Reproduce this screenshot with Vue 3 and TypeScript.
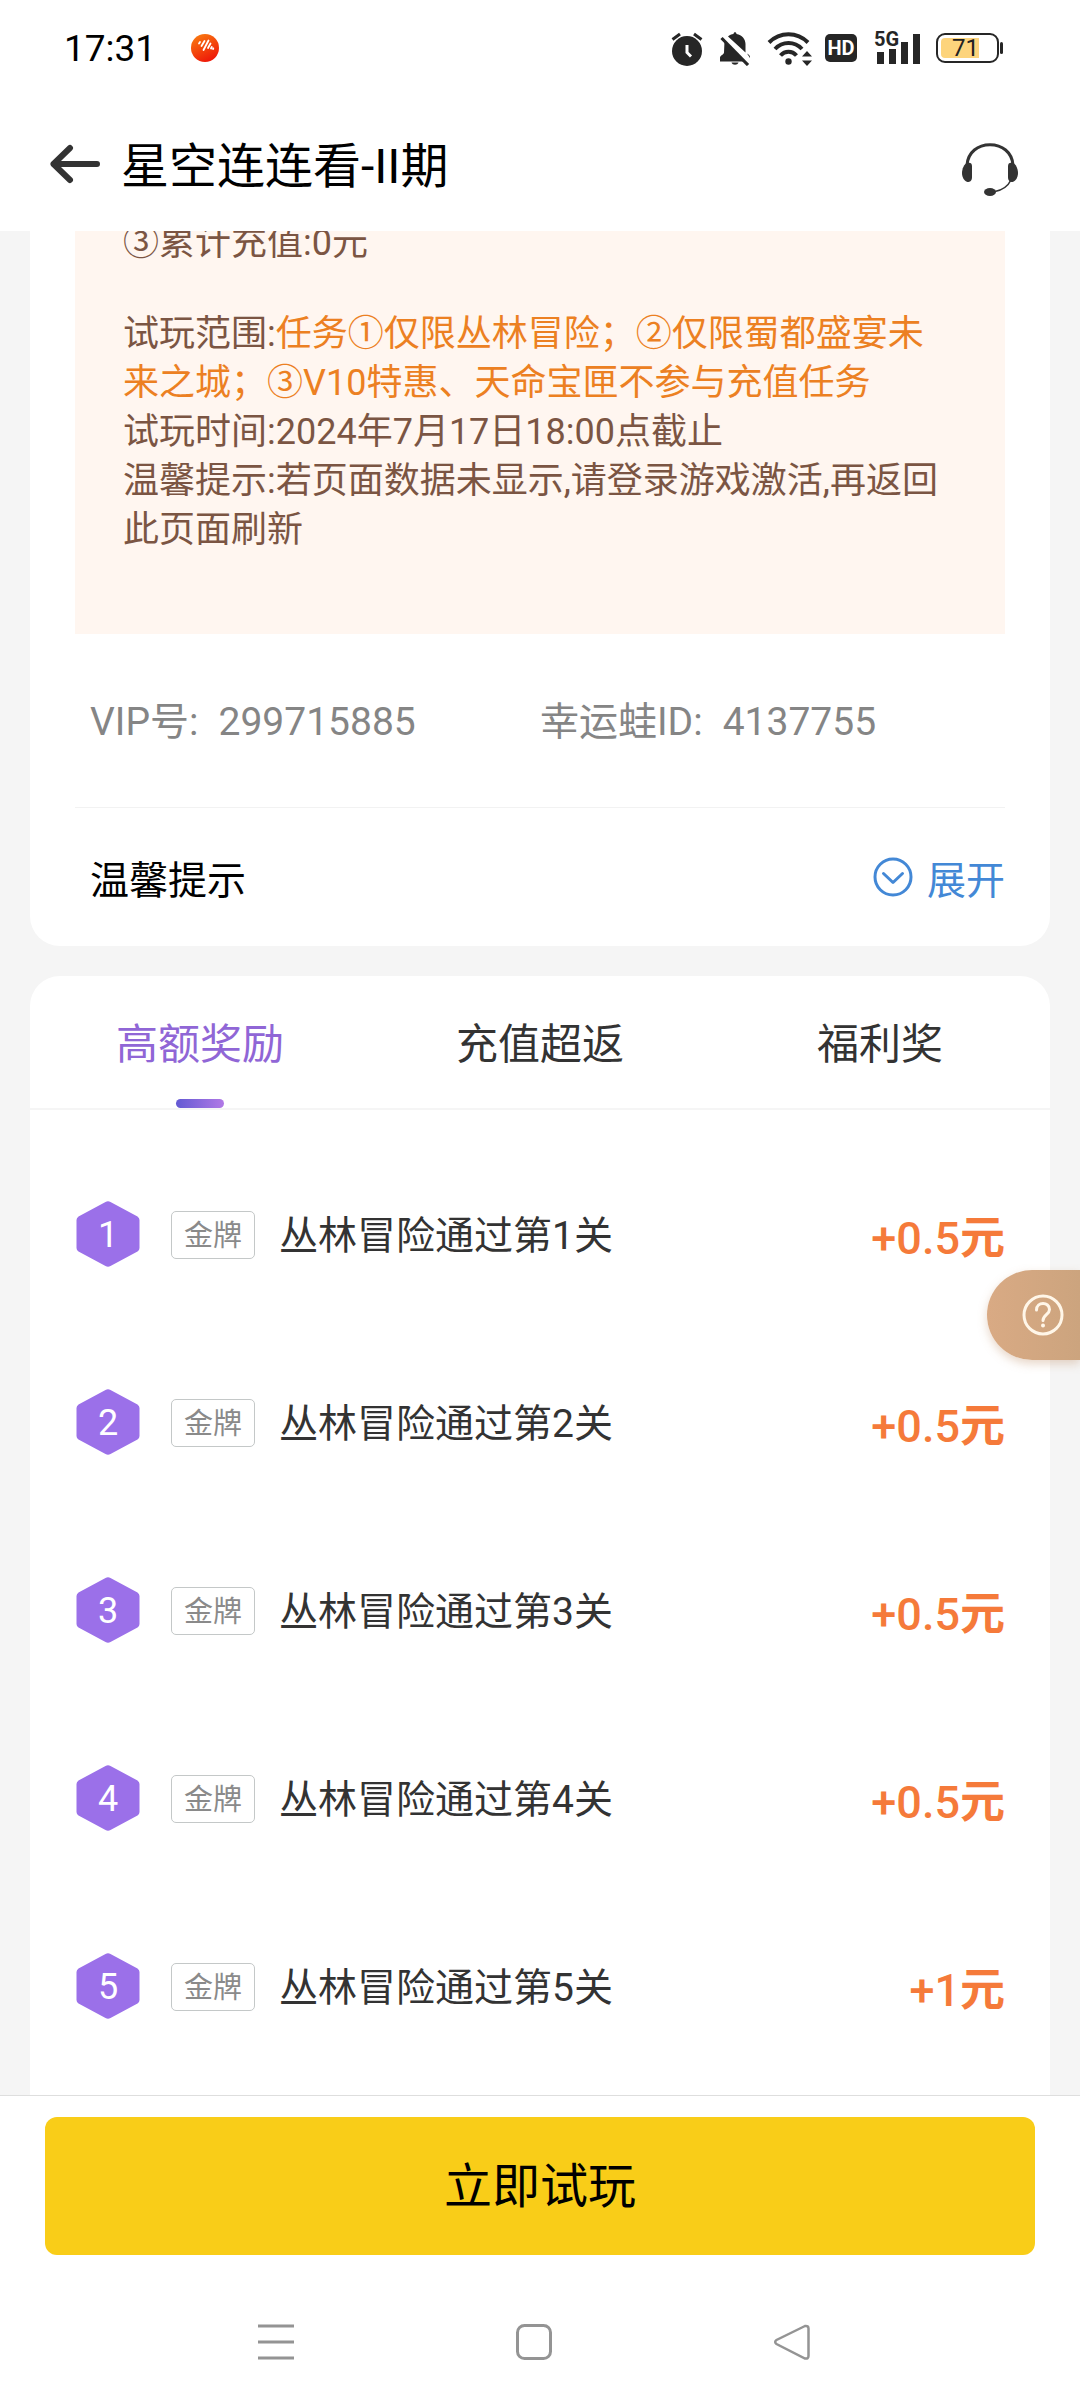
<script setup lang="ts">
import { ref } from 'vue'

interface Task {
  id: number
  level: string
  name: string
  reward: string
}

const tabs: string[] = ['高额奖励', '充值超返', '福利奖']
const activeTab = ref<number>(0)

const tasks: Task[] = [
  { id: 1, level: '金牌', name: '丛林冒险通过第1关', reward: '+0.5' },
  { id: 2, level: '金牌', name: '丛林冒险通过第2关', reward: '+0.5' },
  { id: 3, level: '金牌', name: '丛林冒险通过第3关', reward: '+0.5' },
  { id: 4, level: '金牌', name: '丛林冒险通过第4关', reward: '+0.5' },
  { id: 5, level: '金牌', name: '丛林冒险通过第5关', reward: '+1' },
]
</script>

<template>
  <div class="page">
    <div class="status">
      <span class="clock">17:31</span>
      <svg class="app-dot" width="28" height="28" viewBox="0 0 28 28" aria-hidden="true">
        <defs>
          <linearGradient id="dot" x1="0.2" y1="0" x2="0.7" y2="1">
            <stop offset="0" stop-color="#f97a10" />
            <stop offset="1" stop-color="#ee1408" />
          </linearGradient>
        </defs>
        <circle cx="14" cy="14" r="14" fill="url(#dot)" />
        <g stroke="#fff" stroke-width="1.8" stroke-linecap="round">
          <path d="M8 9.5l1-1.5M10.5 12l3-5M12.500 16l5-9.500M17 14l2.500-4.500M20 14.500l.8-1.500M22 15l.3-.6" />
        </g>
      </svg>
      <div class="status-icons">
        <svg width="32" height="36" viewBox="0 0 32 36" aria-hidden="true">
          <circle cx="16" cy="21" r="15" fill="#262626" />
          <path d="M1.500 9.500L9 4M30.500 9.500L23 4" stroke="#262626" stroke-width="3" />
          <path d="M16 15v7.500l4 4" stroke="#fff" stroke-width="3" fill="none" />
        </svg>
        <svg class="bell" width="32" height="36" viewBox="0 0 32 36" aria-hidden="true">
          <path d="M9 6.500C10.500 5 12.500 4.300 14.500 4C14.500 1.500 17.500 1.500 17.500 4C23 5 26.500 9 26.500 14v8.500z" fill="#262626" />
          <path d="M5.500 11L25 31.500H1v-4c0-2 4-3 4-5z" fill="#262626" />
          <path d="M28 23.500c1.500 1 3 2 3 3.500v1z" fill="#262626" />
          <path d="M12.500 32.500h7c-1 3-6 3-7 0z" fill="#262626" />
          <path d="M2.500 8l26.500 27" stroke="#262626" stroke-width="3.200" />
        </svg>
        <svg class="wifi" width="46" height="36" viewBox="0 0 46 36" aria-hidden="true">
          <g fill="none" stroke="#262626" stroke-width="4">
            <path d="M3 12.500C14 1.500 31 1.500 42 12.500" />
            <path d="M9 19C16.500 11 28.500 11 36 19" />
            <path d="M14.500 25.500C19 20.500 26 20.500 30.500 25.500" />
          </g>
          <circle cx="22.500" cy="31.500" r="3.200" fill="#262626" />
          <path d="M36 26.500l5-5.500 5 5.500zM36 30.500l5 5.500 5-5.500z" fill="#262626" />
        </svg>
        <span class="hd">HD</span>
        <span class="signal">
          <span class="net">5G</span>
          <svg width="46" height="34" viewBox="0 0 46 34" aria-hidden="true">
            <path d="M3 21h7v12H3zM15 18h7v15h-7zM27 11h7v22h-7zM39 3h7v30h-7z" fill="#262626" />
          </svg>
        </span>
        <span class="battery"><span class="charge">71</span></span>
      </div>
    </div>

    <header class="header">
      <button class="icon-btn" type="button" aria-label="返回">
        <svg width="50" height="40" viewBox="0 0 50 40">
          <path d="M20 4L3.500 20L20 36M3.500 20H47" fill="none" stroke="#333" stroke-width="6" stroke-linecap="round" stroke-linejoin="round" />
        </svg>
      </button>
      <h1 class="title">星空连连看-II期</h1>
      <button class="icon-btn service" type="button" aria-label="客服">
        <svg width="56" height="54" viewBox="0 0 56 54">
          <path d="M5 22C6 9 16 1.700 28 1.700S50 9 51 22" fill="none" stroke="#333" stroke-width="3" />
          <path d="M5 20c3-1 5 0 5 3v11c0 4-2 5-4.500 5C2 38 0 34 0 30c0-4 2-9 5-10z" fill="#333" />
          <path d="M51 20c-3-1-5 0-5 3v11c0 4 2 5 4.500 5C54 38 56 34 56 30c0-4-2-9-5-10z" fill="#333" />
          <path d="M49 37c-3 6-8 10-16 11.500" fill="none" stroke="#333" stroke-width="1.600" />
          <ellipse cx="28" cy="49" rx="6" ry="4" fill="#333" />
        </svg>
      </button>
    </header>

    <main class="content">
      <section class="card info">
        <div class="notice">
          <p class="para">③累计充值:0元</p>
          <p>试玩范围:<em>任务①仅限丛林冒险；②仅限蜀都盛宴未来之城；③V10特惠、天命宝匣不参与充值任务</em></p>
          <p>试玩时间:2024年7月17日18:00点截止</p>
          <p>温馨提示:若页面数据未显示,请登录游戏激活,再返回此页面刷新</p>
        </div>
        <dl class="ids">
          <div><dt>VIP号:</dt><dd>299715885</dd></div>
          <div><dt>幸运蛙ID:</dt><dd>4137755</dd></div>
        </dl>
        <div class="tip">
          <h2>温馨提示</h2>
          <button class="expand" type="button">
            <svg width="40" height="40" viewBox="0 0 40 40" aria-hidden="true">
              <g fill="none" stroke="#4388d6" stroke-width="3" stroke-linecap="round" stroke-linejoin="round">
                <circle cx="20" cy="20" r="18" />
                <path d="M10.500 16.500L20 25.500L29.500 16.500" />
              </g>
            </svg>
            展开
          </button>
        </div>
      </section>

      <section class="card tasks">
        <div class="tabs" role="tablist">
          <button
            v-for="(tab, i) in tabs"
            :key="tab"
            class="tab"
            :class="{ active: i === activeTab }"
            type="button"
            role="tab"
            :aria-selected="i === activeTab"
            @click="activeTab = i"
          >{{ tab }}</button>
        </div>
        <ol class="list">
          <li v-for="task in tasks" :key="task.id" class="task">
            <span class="num">
              <svg width="64" height="66" viewBox="0 0 64 66" aria-hidden="true">
                <path d="M29.500 1Q32 -.5 34.500 1L61.500 15.500Q63.500 17 63.500 19V47Q63.500 49 61.500 50.500L34.500 65Q32 66.500 29.500 65L2.500 50.500Q.5 49 .5 47V19Q.5 17 2.500 15.500Z" fill="#9b70e9" />
              </svg>
              <b>{{ task.id }}</b>
            </span>
            <span class="level">{{ task.level }}</span>
            <span class="name">{{ task.name }}</span>
            <span class="reward">{{ task.reward }}<i>元</i></span>
          </li>
        </ol>
      </section>

      <button class="help" type="button" aria-label="帮助">
        <svg width="42" height="42" viewBox="0 0 42 42">
          <g fill="none" stroke="#fff6e8" stroke-width="3" stroke-linecap="round">
            <circle cx="21" cy="21" r="19" />
            <path d="M14.500 16C14.500 7.500 27.500 7.500 27.500 15.500C27.500 20.500 21 21 21 26.500" />
          </g>
          <circle cx="21" cy="31.500" r="2" fill="#fff6e8" />
        </svg>
      </button>
    </main>

    <footer class="footer">
      <button class="play" type="button">立即试玩</button>
    </footer>

    <nav class="nav">
      <button class="icon-btn" type="button" aria-label="最近任务">
        <svg width="36" height="38" viewBox="0 0 36 38"><path d="M0 3h36M0 19h36M0 35h36" stroke="#949494" stroke-width="3" /></svg>
      </button>
      <button class="icon-btn" type="button" aria-label="主屏幕">
        <svg width="38" height="38" viewBox="0 0 38 38"><rect x="2.500" y="2.500" width="33" height="33" rx="7" fill="none" stroke="#949494" stroke-width="3" /></svg>
      </button>
      <button class="icon-btn" type="button" aria-label="后退">
        <svg width="38" height="38" viewBox="0 0 38 38"><path d="M32 3L3.500 17Q.8 19 3.500 21L32 35.500Q35.500 36 35.500 33V5.500Q35.500 2.500 32 3Z" fill="none" stroke="#949494" stroke-width="2.500" /></svg>
      </button>
    </nav>
  </div>
</template>

<style>
body {
  margin: 0;
  background: #fff;
}
</style>

<style scoped>
.page {
  display: flex;
  flex-direction: column;
  min-height: 100vh;
  font-family: Roboto, "Noto Sans CJK SC", sans-serif;
  color: #333;
  background: #fff;
}
button {
  margin: 0;
  padding: 0;
  border: 0;
  background: none;
  font: inherit;
  color: inherit;
}
h1, h2, p, dl, dd, ol {
  margin: 0;
  padding: 0;
  font-weight: 400;
}
svg {
  display: block;
}

.status {
  display: flex;
  align-items: center;
  height: 96px;
  padding: 0 81px 0 64px;
}
.clock {
  width: 127px;
  font-size: 37px;
  color: #000;
}
.status-icons {
  display: flex;
  align-items: center;
  margin-left: auto;
}
.bell {
  margin: 0 15px 0 16px;
}
.hd {
  width: 32px;
  margin: 0 17px 0 13px;
  border-radius: 5px;
  background: #262626;
  color: #fff;
  font-size: 20px;
  font-weight: 700;
  line-height: 28px;
  text-align: center;
}
.signal {
  position: relative;
}
.net {
  position: absolute;
  top: -2px;
  left: 0;
  font-size: 20px;
  font-weight: 700;
  line-height: 20px;
  color: #262626;
}
.battery {
  position: relative;
  box-sizing: border-box;
  width: 63px;
  height: 30px;
  margin-left: 16px;
  padding: 3px;
  border: 2px solid #262626;
  border-radius: 9px;
}
.battery::after {
  content: "";
  position: absolute;
  top: 7px;
  right: -6px;
  width: 3px;
  height: 12px;
  border-radius: 2px;
  background: #262626;
}
.charge {
  display: block;
  width: 38px;
  border-radius: 4px 0 0 4px;
  background: #fdd47c;
  color: #222;
  font-size: 24px;
  line-height: 20px;
  text-align: right;
}

.header {
  display: flex;
  align-items: center;
  gap: 21px;
  height: 135px;
  padding: 0 62px 0 50px;
}
.title {
  flex: 1;
  padding-bottom: 4px;
  font-size: 48px;
  color: #000;
}
.service {
  padding-top: 12px;
}

.content {
  position: relative;
  display: flex;
  flex: 1;
  flex-direction: column;
  gap: 30px;
  padding: 0 30px;
  overflow: hidden;
  background: #f5f5f5;
}
.card {
  border-radius: 30px;
  background: #fff;
}
.info {
  margin-top: -12px;
  border-radius: 0 0 30px 30px;
  padding: 0 45px;
}
.notice {
  padding: 0 48px 79px;
  background: #fff6f0;
  color: #7b5543;
  font-size: 36px;
  line-height: 49px;
}
.notice .para {
  margin-bottom: 42px;
}
.notice em {
  font-style: normal;
  color: #ec8022;
}
.ids {
  display: grid;
  grid-template-columns: 1fr 1fr;
  padding: 3px 15px 0;
  border-bottom: 1px solid #f2f2f2;
  color: #858585;
  font-size: 39px;
  line-height: 170px;
}
.ids div {
  display: flex;
  gap: 20px;
}
.tip {
  display: flex;
  align-items: center;
  justify-content: space-between;
  height: 138px;
  padding-left: 15px;
}
.tip h2 {
  font-size: 39px;
  color: #000;
}
.expand {
  display: flex;
  align-items: center;
  gap: 14px;
  font-size: 39px;
  color: #4388d6;
}

.tasks {
  flex: 1;
  border-radius: 30px 30px 0 0;
}
.tabs {
  display: grid;
  grid-template-columns: repeat(3, 1fr);
  border-bottom: 2px solid #f5f5f5;
}
.tab {
  position: relative;
  height: 132px;
  padding-bottom: 4px;
  font-size: 42px;
}
.tab.active {
  color: #9066d6;
}
.tab.active::after {
  content: "";
  position: absolute;
  bottom: 0;
  left: calc(50% - 24px);
  width: 48px;
  height: 9px;
  border-radius: 5px;
  background: linear-gradient(90deg, #6359d3, #b179e6);
}
.list {
  padding: 30px 45px 0 46px;
  list-style: none;
}
.task {
  display: flex;
  align-items: center;
  height: 188px;
}
.num {
  position: relative;
  margin-right: 31px;
}
.num b {
  position: absolute;
  inset: 0;
  font-size: 36px;
  font-weight: 400;
  line-height: 68px;
  text-align: center;
  color: #fff;
}
.level {
  width: 82px;
  margin: 2px 24px 0 0;
  padding-top: 3px;
  border: 1px solid #c4c8c8;
  border-radius: 5px;
  color: #8a8a8a;
  font-size: 29px;
  line-height: 43px;
  text-align: center;
}
.name {
  flex: 1;
  padding-bottom: 4px;
  font-size: 39px;
}
.reward {
  color: #f57a3a;
  font-size: 45px;
  font-weight: 500;
}
.reward i {
  font-style: normal;
  font-weight: 700;
}

.help {
  position: absolute;
  top: 1039px;
  right: 0;
  display: flex;
  align-items: center;
  width: 93px;
  height: 90px;
  padding-left: 35px;
  border-radius: 45px 0 0 45px;
  background: linear-gradient(90deg, #d9aa84, #cca47e);
  box-shadow: 0 4px 10px rgba(190, 140, 100, 0.35);
}

.footer {
  padding: 21px 45px 0;
  border-top: 1px solid #dedede;
}
.play {
  width: 100%;
  height: 138px;
  padding-bottom: 8px;
  border-radius: 12px;
  background: #f9cd18;
  font-size: 48px;
  color: #000;
}
.nav {
  display: grid;
  grid-template-columns: repeat(3, 1fr);
  align-items: center;
  justify-items: center;
  height: 153px;
  padding: 0 159px 0 147px;
}
.nav .icon-btn {
  margin-bottom: -20px;
}
</style>
